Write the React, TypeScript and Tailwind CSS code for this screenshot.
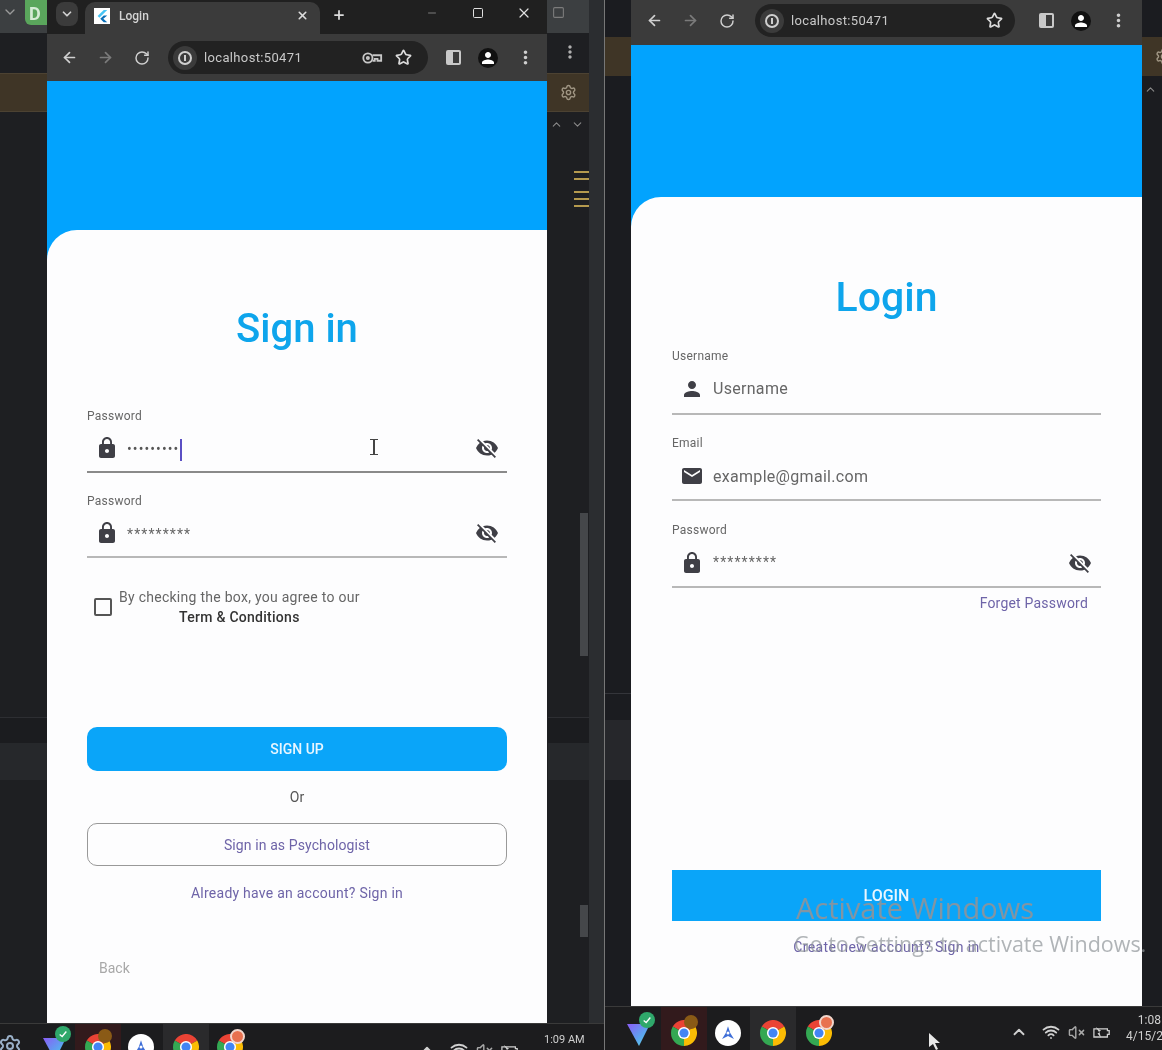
import { ReactNode } from "react"
import { ArrowLeft, ArrowRight, ChevronDown, ChevronUp, Minus, Plus, RotateCw, Settings, Square, Star, VolumeX, Wifi, X } from "lucide-react"
import { MdEmail, MdLock, MdMoreVert, MdPerson, MdVisibilityOff } from "react-icons/md"

const font = { roboto: "font-['Roboto',sans-serif]" }

const ChromeLogo = ({ className = "" }: { className?: string }) => (
    <svg viewBox="0 0 24 24" className={className}>
        <circle cx="12" cy="12" r="8" fill="none" stroke="#ea4335" strokeWidth="8" pathLength="3" strokeDasharray="1 2" transform="rotate(-150 12 12)" />
        <circle cx="12" cy="12" r="8" fill="none" stroke="#fbbc04" strokeWidth="8" pathLength="3" strokeDasharray="1 2" transform="rotate(-30 12 12)" />
        <circle cx="12" cy="12" r="8" fill="none" stroke="#34a853" strokeWidth="8" pathLength="3" strokeDasharray="1 2" transform="rotate(90 12 12)" />
        <circle cx="12" cy="12" r="5.6" fill="#fff" />
        <circle cx="12" cy="12" r="4.2" fill="#4285f4" />
    </svg>
)

const VpnLogo = () => (
    <div className="relative w-[26px] h-[26px]">
        <svg viewBox="0 0 26 26" className="w-[26px] h-[26px]">
            <defs>
                <linearGradient id="vlogo" x1="0" y1="0" x2="1" y2="1">
                    <stop offset="0" stopColor="#8a5cf6" />
                    <stop offset="0.6" stopColor="#5aa8f0" />
                    <stop offset="1" stopColor="#6fe8e0" />
                </linearGradient>
            </defs>
            <path d="M1 4 L24 4 L13 26 Z" fill="url(#vlogo)" />
        </svg>
        <div className="absolute -top-[8px] left-[13px] w-[16px] h-[16px] rounded-full bg-[#2fa86b] flex items-center justify-center">
            <svg viewBox="0 0 12 12" className="w-[10px] h-[10px]"><path d="M2 6.5 L5 9 L10 3" fill="none" stroke="#fff" strokeWidth="1.6" /></svg>
        </div>
    </div>
)

const StarLogo = () => (
    <div className="w-[26px] h-[26px] rounded-full bg-white flex items-center justify-center">
        <svg viewBox="0 0 24 24" className="w-[18px] h-[18px]"><path d="M12 3 L15 12 L20 20 L12 16 L4 20 L9 12 Z" fill="#3f6fd8" /><circle cx="12" cy="12" r="2" fill="#fff" /></svg>
    </div>
)

const ChromeBadge = ({ color, ring }: { color: string; ring?: boolean }) => (
    <div className="relative w-[26px] h-[26px]">
        <ChromeLogo className="w-[26px] h-[26px]" />
        {ring ? (
            <div className="absolute -top-[5px] left-[13px] w-[15px] h-[15px] rounded-full border-2 border-[#f1d6cc]" style={{ background: color }} />
        ) : (
            <div className="absolute -top-[5px] left-[13px] w-[14px] h-[14px] rounded-full" style={{ background: color }} />
        )}
    </div>
)

// taskbar slot: optional hover tint behind the icon and the small running mark under it
const Slot = ({ className, tint, mark, children }: { className: string; tint?: string; mark?: string; children: ReactNode }) => (
    <div className={`relative ${className}`}>
        {tint && <div className={`absolute -left-[10px] -right-[10px] -top-[13px] h-[60px] ${tint}`} />}
        {mark && <div className={`absolute left-1/2 -translate-x-1/2 top-[31px] h-[3px] ${mark}`} />}
        <div className="relative">{children}</div>
    </div>
)

const KeyIcon = () => (
    <svg viewBox="0 0 24 24" className="w-[22px] h-[22px]" fill="none" stroke="#c8c8c8" strokeWidth="2">
        <circle cx="7.5" cy="12" r="5" />
        <circle cx="7.5" cy="12" r="1.2" />
        <path d="M12.5 9 H22 V15 H18 V13 H15 V15 H12.5" />
    </svg>
)

const PanelIcon = () => (
    <div className="w-[15px] h-[15px] rounded-[2px] bg-[#c9c9c9] flex justify-end p-[2px]">
        <div className="w-[6px] h-full bg-[#3b3b3b]" />
    </div>
)

const Toolbar = ({ extraKey, pad, omni, tail, starGap }: { extraKey?: boolean; pad: string; omni: string; tail: string; starGap: string }) => (
    <div className={`h-full bg-[#3b3b3b] flex items-center ${pad}`}>
        <ArrowLeft size={17} strokeWidth={2.4} className="text-[#d0d0d0] shrink-0" />
        <ArrowRight size={17} strokeWidth={2.4} className="text-[#7b7b7b] shrink-0 ml-[19px]" />
        <RotateCw size={16} strokeWidth={2.2} className="text-[#d0d0d0] shrink-0 ml-[20px]" />
        <div className={`h-[33px] rounded-full bg-[#222222] flex items-center shrink-0 ${omni}`}>
            <div className="w-[24px] h-[24px] rounded-full bg-[#3b3b3b] flex items-center justify-center ml-[5px]">
                <div className="w-[14px] h-[14px] rounded-full border-2 border-[#cfcfcf] flex items-center justify-center">
                    <div className="w-[2px] h-[6px] bg-[#cfcfcf]" />
                </div>
            </div>
            <span className={`${font.roboto} text-[13px] text-[#c9c9c9] ml-[7px] tracking-[0.35px]`}>localhost:50471</span>
            <div className="flex-1" />
            {extraKey && <div className="mr-[12px]"><KeyIcon /></div>}
            <Star size={17} strokeWidth={2.4} className={`text-[#dcdcdc] ${starGap}`} />
        </div>
        <div className={`flex items-center flex-1 justify-between ${tail}`}>
            <PanelIcon />
            <div className="w-[20px] h-[20px] rounded-full bg-[#111] flex items-center justify-center">
                <MdPerson size={18} className="text-white" />
            </div>
            <MdMoreVert size={21} className="text-[#cfcfcf]" />
        </div>
    </div>
)

const Field = ({ label, icon, children, eye, line = "border-[#b8b8b8]", right = "pr-2", gap = "ml-2 pt-[3px]", height = "h-[49px]", pt = "pt-[1px]", topGap }: {
    label: string; icon: ReactNode; children: ReactNode; eye?: boolean; line?: string; right?: string; gap?: string; height?: string; pt?: string; topGap: string
}) => (
    <div className={topGap}>
        <div className="text-[12px] leading-[16px] text-[#666] tracking-[0.25px]">{label}</div>
        <div className={`flex items-center border-b-2 pl-2 ${height} ${pt} ${line} ${right}`}>
            <div className="w-6 h-6 shrink-0 text-[#3f3f46]">{icon}</div>
            <div className={`flex-1 flex items-center ${gap}`}>{children}</div>
            {eye && <MdVisibilityOff size={24} className="text-[#3f3f46] shrink-0" />}
        </div>
    </div>
)

const Taskbar = ({ className, children }: { className: string; children: ReactNode }) => (
    <div className={`absolute left-0 right-0 bottom-0 bg-[#1c1c1e] border-t border-[#3a3a3a] overflow-hidden ${className}`}>{children}</div>
)

const Tray = ({ className }: { className: string }) => (
    <div className={`flex items-center text-[#d0d0d0] ${className}`}>
        <ChevronUp size={18} strokeWidth={2.4} />
        <Wifi size={18} strokeWidth={2.4} className="ml-[14px]" />
        <VolumeX size={17} className="ml-[8px] text-[#a8a8a8]" />
        <svg viewBox="0 0 20 14" className="w-[18px] h-[13px] ml-[8px]">
            <path d="M1 3 H16 V5 H18 V9 H16 V12 H1 Z" fill="none" stroke="#d0d0d0" strokeWidth="1.4" />
            <path d="M3 1 L7 7 L5 8 L9 13 L7 6 L9 5 Z" fill="#d0d0d0" />
        </svg>
    </div>
)

const App = () => {
    return (
        <div className={`relative w-[1162px] h-[1050px] flex overflow-hidden bg-[#1e1f22] blur-[0.5px] ${font.roboto}`}>
            {/* LEFT */}
            <div className="relative w-[605px] h-full shrink-0 bg-[#1e1f22] overflow-hidden border-r border-[#777]">
                <div className="absolute left-0 right-0 top-0 h-[33px] bg-[#3c3f41]" />
                <ChevronDown size={16} className="absolute left-[2px] top-[4px] text-[#9a9a9a]" />
                <div className="absolute left-[25px] top-0 w-[30px] h-[25px] rounded-b-[6px] bg-[#5aa65c] text-[#d6ecd6] font-bold text-[18px] pl-[4px]">D</div>
                <div className="absolute left-0 right-0 top-[73px] h-[39px] bg-[#3f3526] border-y border-[#4c4232]" />
                <div className="absolute right-0 top-0 bottom-0 w-[15px] bg-[#2b2d30]" />
                <div className="absolute left-[548px] right-[15px] top-[717px] h-[27px] bg-[#1b1c1f] border-t border-[#2d2e32]" />
                <div className="absolute left-[548px] right-[15px] top-[743px] h-[37px] bg-[#26282b]" />
                <div className="absolute left-0 w-[47px] top-[717px] h-[27px] bg-[#1b1c1f] border-t border-[#2d2e32]" />
                <div className="absolute left-0 w-[47px] top-[743px] h-[37px] bg-[#26282b]" />
                <Square size={13} className="absolute left-[552px] top-[6px] text-[#7c7c7c]" />
                <MdMoreVert size={20} className="absolute left-[560px] top-[42px] text-[#b0b0b0]" />
                <Settings size={17} className="absolute left-[560px] top-[84px] text-[#a09684]" />
                <ChevronUp size={13} className="absolute left-[550px] top-[118px] text-[#8a8a8a]" />
                <ChevronDown size={13} className="absolute left-[571px] top-[118px] text-[#8a8a8a]" />
                <div className="absolute left-[574px] top-[171px] w-[15px] flex flex-col">
                    <div className="h-[2px] bg-[#b59a4e]" />
                    <div className="h-[2px] mt-[5px] bg-[#b59a4e]" />
                    <div className="h-[2px] mt-[11px] bg-[#b59a4e]" />
                    <div className="h-[2px] mt-[5px] bg-[#b59a4e]" />
                    <div className="h-[2px] mt-[5px] bg-[#b59a4e]" />
                </div>
                <div className="absolute left-[580px] top-[513px] w-[8px] h-[143px] bg-[#45474a]" />
                <div className="absolute left-[580px] top-[905px] w-[8px] h-[32px] bg-[#45474a]" />

                {/* window */}
                <div className="absolute left-[47px] top-0 w-[500px] h-[1023px] flex flex-col">
                    <div className="h-[34px] bg-[#202020] flex items-end shrink-0 pl-[9px]">
                        <div className="w-[22px] h-[24px] rounded-[8px] bg-[#3b3b3b] self-center -mt-[6px] flex items-center justify-center">
                            <ChevronDown size={14} strokeWidth={3} className="text-[#d0d0d0]" />
                        </div>
                        <div className="w-[235px] h-[32px] ml-[7px] rounded-t-[10px] bg-[#3b3b3b] flex items-center pl-[9px] pr-[11px] pb-[5px]">
                            <div className="w-[16px] h-[16px] bg-white flex items-center justify-center">
                                <svg viewBox="0 0 16 16" className="w-[14px] h-[14px]"><path d="M10 1 L3 8 L5 10 L14 1 Z" fill="#45c4f5" /><path d="M10 7.5 L6 11 L10 15 L14 15 L9.5 11 L14 7.5 Z" fill="#0a6fb8" /></svg>
                            </div>
                            <span className="text-[12px] text-[#d4d4d4] ml-[9px] font-medium">Login</span>
                            <div className="flex-1" />
                            <X size={13} strokeWidth={3} className="text-[#dcdcdc]" />
                        </div>
                        <Plus size={14} strokeWidth={3} className="text-[#dcdcdc] self-center ml-[12px] -mt-[5px]" />
                        <div className="flex-1" />
                        <div className="self-center flex items-center pr-[15px] -mt-[8px]">
                            <Minus size={12} className="text-[#7a7a7a]" />
                            <Square size={12} strokeWidth={2} className="text-[#e0e0e0] ml-[34px]" />
                            <X size={16} strokeWidth={1.8} className="text-[#e0e0e0] ml-[32px]" />
                        </div>
                    </div>
                    <div className="h-[47px] shrink-0">
                        <Toolbar extraKey pad="pl-[14px]" omni="w-[260px] ml-[18px]" tail="pl-[18px] pr-[11px]" starGap="mr-[16px]" />
                    </div>
                    <div className="h-[149px] shrink-0 bg-[#02a3fe]" />
                    <div className="flex-1 bg-[#02a3fe]">
                        <div className="h-full bg-[#fdfdfe] rounded-tl-[30px] px-[40px] pt-[75px]">
                            <h1 className="text-[40px] leading-[48px] font-medium text-[#0ea5ec] text-center">Sign in</h1>
                            <Field topGap="mt-[55px]" label="Password" line="border-[#8a8a8a]" eye icon={<MdLock size={24} />}>
                                <span className="text-[14px] text-[#555] tracking-[1.1px]">•••••••••</span>
                                <span className="w-[2px] h-[22px] bg-[#5b4fc4] ml-[1px]" />
                            </Field>
                            <Field topGap="mt-[20px]" label="Password" eye icon={<MdLock size={24} />}>
                                <span className="text-[14px] text-[#666] tracking-[1.1px]">*********</span>
                            </Field>
                            <div className="flex mt-[29px] pl-[7px]">
                                <div className="w-[18px] h-[18px] mt-[11px] border-2 border-[#555] rounded-[2px] shrink-0" />
                                <div className="ml-[7px] text-[14px] leading-[20px] text-[#666] tracking-[0.27px] text-center">
                                    <div>By checking the box, you agree to our</div>
                                    <div className="font-medium text-[#333]">Term &amp; Conditions</div>
                                </div>
                            </div>
                            <div className="mt-[100px] h-[44px] rounded-[10px] bg-[#0aa5f9] flex items-center justify-center text-[14px] font-medium text-[#e8f6ff]">SIGN UP</div>
                            <div className="mt-[16px] text-[14px] leading-[20px] text-[#555] text-center">Or</div>
                            <div className="mt-[16px] h-[43px] pt-[1px] rounded-[10px] border border-[#999] flex items-center justify-center text-[14px] text-[#6e64a8] tracking-[0.1px]">Sign in as Psychologist</div>
                            <div className="mt-[17px] text-[14px] leading-[20px] text-[#6e64a8] text-center tracking-[0.25px]">Already have an account? Sign in</div>
                            <div className="mt-[55px] ml-[12px] text-[14px] leading-[20px] text-[#a8a8a8]">Back</div>
                        </div>
                    </div>
                </div>

                {/* text cursor over the field */}
                <div className="absolute left-[370px] top-[439px] w-[8px] h-[16px] border-y border-[#444] flex justify-center">
                    <div className="w-[1.5px] h-full bg-[#444]" />
                </div>

                <Taskbar className="h-[27px]">
                    <div className="flex items-start pt-[10px] h-[60px]">
                        <Settings size={24} className="ml-[-2px] text-[#9ab0c8] shrink-0" />
                        <div className="ml-[20px]"><VpnLogo /></div>
                        <Slot className="ml-[17px]" tint="bg-[#321a1c]"><ChromeBadge color="#8a5a16" /></Slot>
                        <div className="ml-[17px] w-[26px] h-[26px] rounded-full"><StarLogo /></div>
                        <Slot className="ml-[19px]" tint="bg-[#2a2a2c]"><ChromeLogo className="w-[26px] h-[26px]" /></Slot>
                        <div className="ml-[18px]"><ChromeBadge color="#e8714f" ring /></div>
                        <Tray className="ml-[175px] mt-[7px]" />
                        <div className="ml-[25px] -mt-[2px] text-[11px] text-[#cfcfcf] whitespace-nowrap">1:09 AM</div>
                    </div>
                </Taskbar>
            </div>

            {/* RIGHT */}
            <div className="relative flex-1 h-full bg-[#1b1c20] overflow-hidden">
                <div className="absolute left-0 right-0 top-[37px] h-[39px] bg-[#3f3526]" />
                <div className="absolute left-0 w-[26px] top-[693px] h-[1px] bg-[#34353a]" />
                <div className="absolute left-0 w-[26px] top-[720px] h-[60px] bg-[#26272b]" />
                <Settings size={17} className="absolute left-[550px] top-[48px] text-[#a09684]" />
                <ChevronUp size={13} className="absolute left-[539px] top-[83px] text-[#8a8a8a]" />

                <div className="absolute left-[26px] top-0 w-[511px] h-[1006px] flex flex-col">
                    <div className="h-[45px] shrink-0">
                        <Toolbar pad="pl-[15px] pb-[4px]" omni="w-[260px] ml-[20px]" tail="pl-[24px] pr-[13px]" starGap="mr-[12px]" />
                    </div>
                    <div className="h-[152px] shrink-0 bg-[#02a3fe]" />
                    <div className="flex-1 bg-[#02a3fe]">
                        <div className="h-full bg-[#fdfdfe] rounded-tl-[30px] pl-[41px] pr-[41px] pt-[76px]">
                            <h1 className="text-[41px] leading-[48px] font-medium text-[#0ea5ec] text-center">Login</h1>
                            <Field topGap="mt-[27px]" label="Username" height="h-[51px]" pt="pt-0" gap="ml-[9px] pt-[1px]" icon={<MdPerson size={24} />}>
                                <span className="text-[16px] text-[#666] tracking-[0.3px]">Username</span>
                            </Field>
                            <Field topGap="mt-[20px]" label="Email" height="h-[50px]" pt="pt-[2px]" gap="ml-[9px] pt-[2px]" icon={<MdEmail size={24} />}>
                                <span className="text-[16px] text-[#666] tracking-[0.3px]">example@gmail.com</span>
                            </Field>
                            <Field topGap="mt-[21px]" label="Password" height="h-[50px]" pt="pt-[1px]" gap="ml-[9px]" eye right="pr-[9px]" icon={<MdLock size={24} />}>
                                <span className="text-[14px] text-[#666] tracking-[1.1px]">*********</span>
                            </Field>
                            <div className="mt-[5px] pr-[13px] text-right text-[14px] leading-[20px] text-[#6e64a8] tracking-[0.2px]">Forget Password</div>
                            <div className="mt-[257px] h-[51px] bg-[#0aa5f9] flex items-center justify-center text-[16px] font-medium text-[#e8f6ff]">LOGIN</div>
                            <div className="mt-[16px] text-[14px] leading-[20px] text-[#6e64a8] text-center tracking-[0.4px]">Create new account? Sign in</div>
                        </div>
                    </div>
                </div>

                <Taskbar className="h-[44px]">
                    <div className="flex items-start pt-[13px] h-[60px]">
                        <Slot className="ml-[21px]" mark="w-[4px] bg-[#8a8a8a]"><VpnLogo /></Slot>
                        <Slot className="ml-[19px]" tint="bg-[#321a1c]" mark="w-[4px] bg-[#c98a9a]"><ChromeBadge color="#8a5a16" /></Slot>
                        <Slot className="ml-[18px]" mark="w-[4px] bg-[#8a8a8a]"><StarLogo /></Slot>
                        <Slot className="ml-[19px]" tint="bg-[#2a2a2c]" mark="w-[14px] bg-[#6fc3e8]"><ChromeLogo className="w-[26px] h-[26px]" /></Slot>
                        <Slot className="ml-[20px]" mark="w-[4px] bg-[#8a8a8a]"><ChromeBadge color="#e8714f" ring /></Slot>
                        <Tray className="ml-[178px] mt-[3px]" />
                        <div className="ml-[15px] -mt-[8px] text-[12px] leading-[16px] text-[#cfcfcf] text-right whitespace-nowrap">
                            <div className="pr-[2px]">1:08</div>
                            <div>4/15/2</div>
                        </div>
                    </div>
                </Taskbar>

                {/* mouse pointer */}
                <svg viewBox="0 0 14 20" className="absolute left-[323px] top-[1032px] w-[14px] h-[20px]">
                    <path d="M1 1 L1 15 L5 12 L8 18 L10 17 L7 11 L12 11 Z" fill="#e8e8e8" />
                </svg>
            </div>

            {/* Windows watermark */}
            <div className="absolute left-[796px] top-[891px] font-['Open_Sans',sans-serif] pointer-events-none whitespace-nowrap">
                <div className="text-[29px] leading-[34px] text-[#8f9499]/90">Activate Windows</div>
                <div className="text-[21.5px] leading-[28px] mt-[5px] -ml-[2px] text-[#8f9499]/70">Go to Settings to activate Windows.</div>
            </div>
        </div>
    )
}

export default App
